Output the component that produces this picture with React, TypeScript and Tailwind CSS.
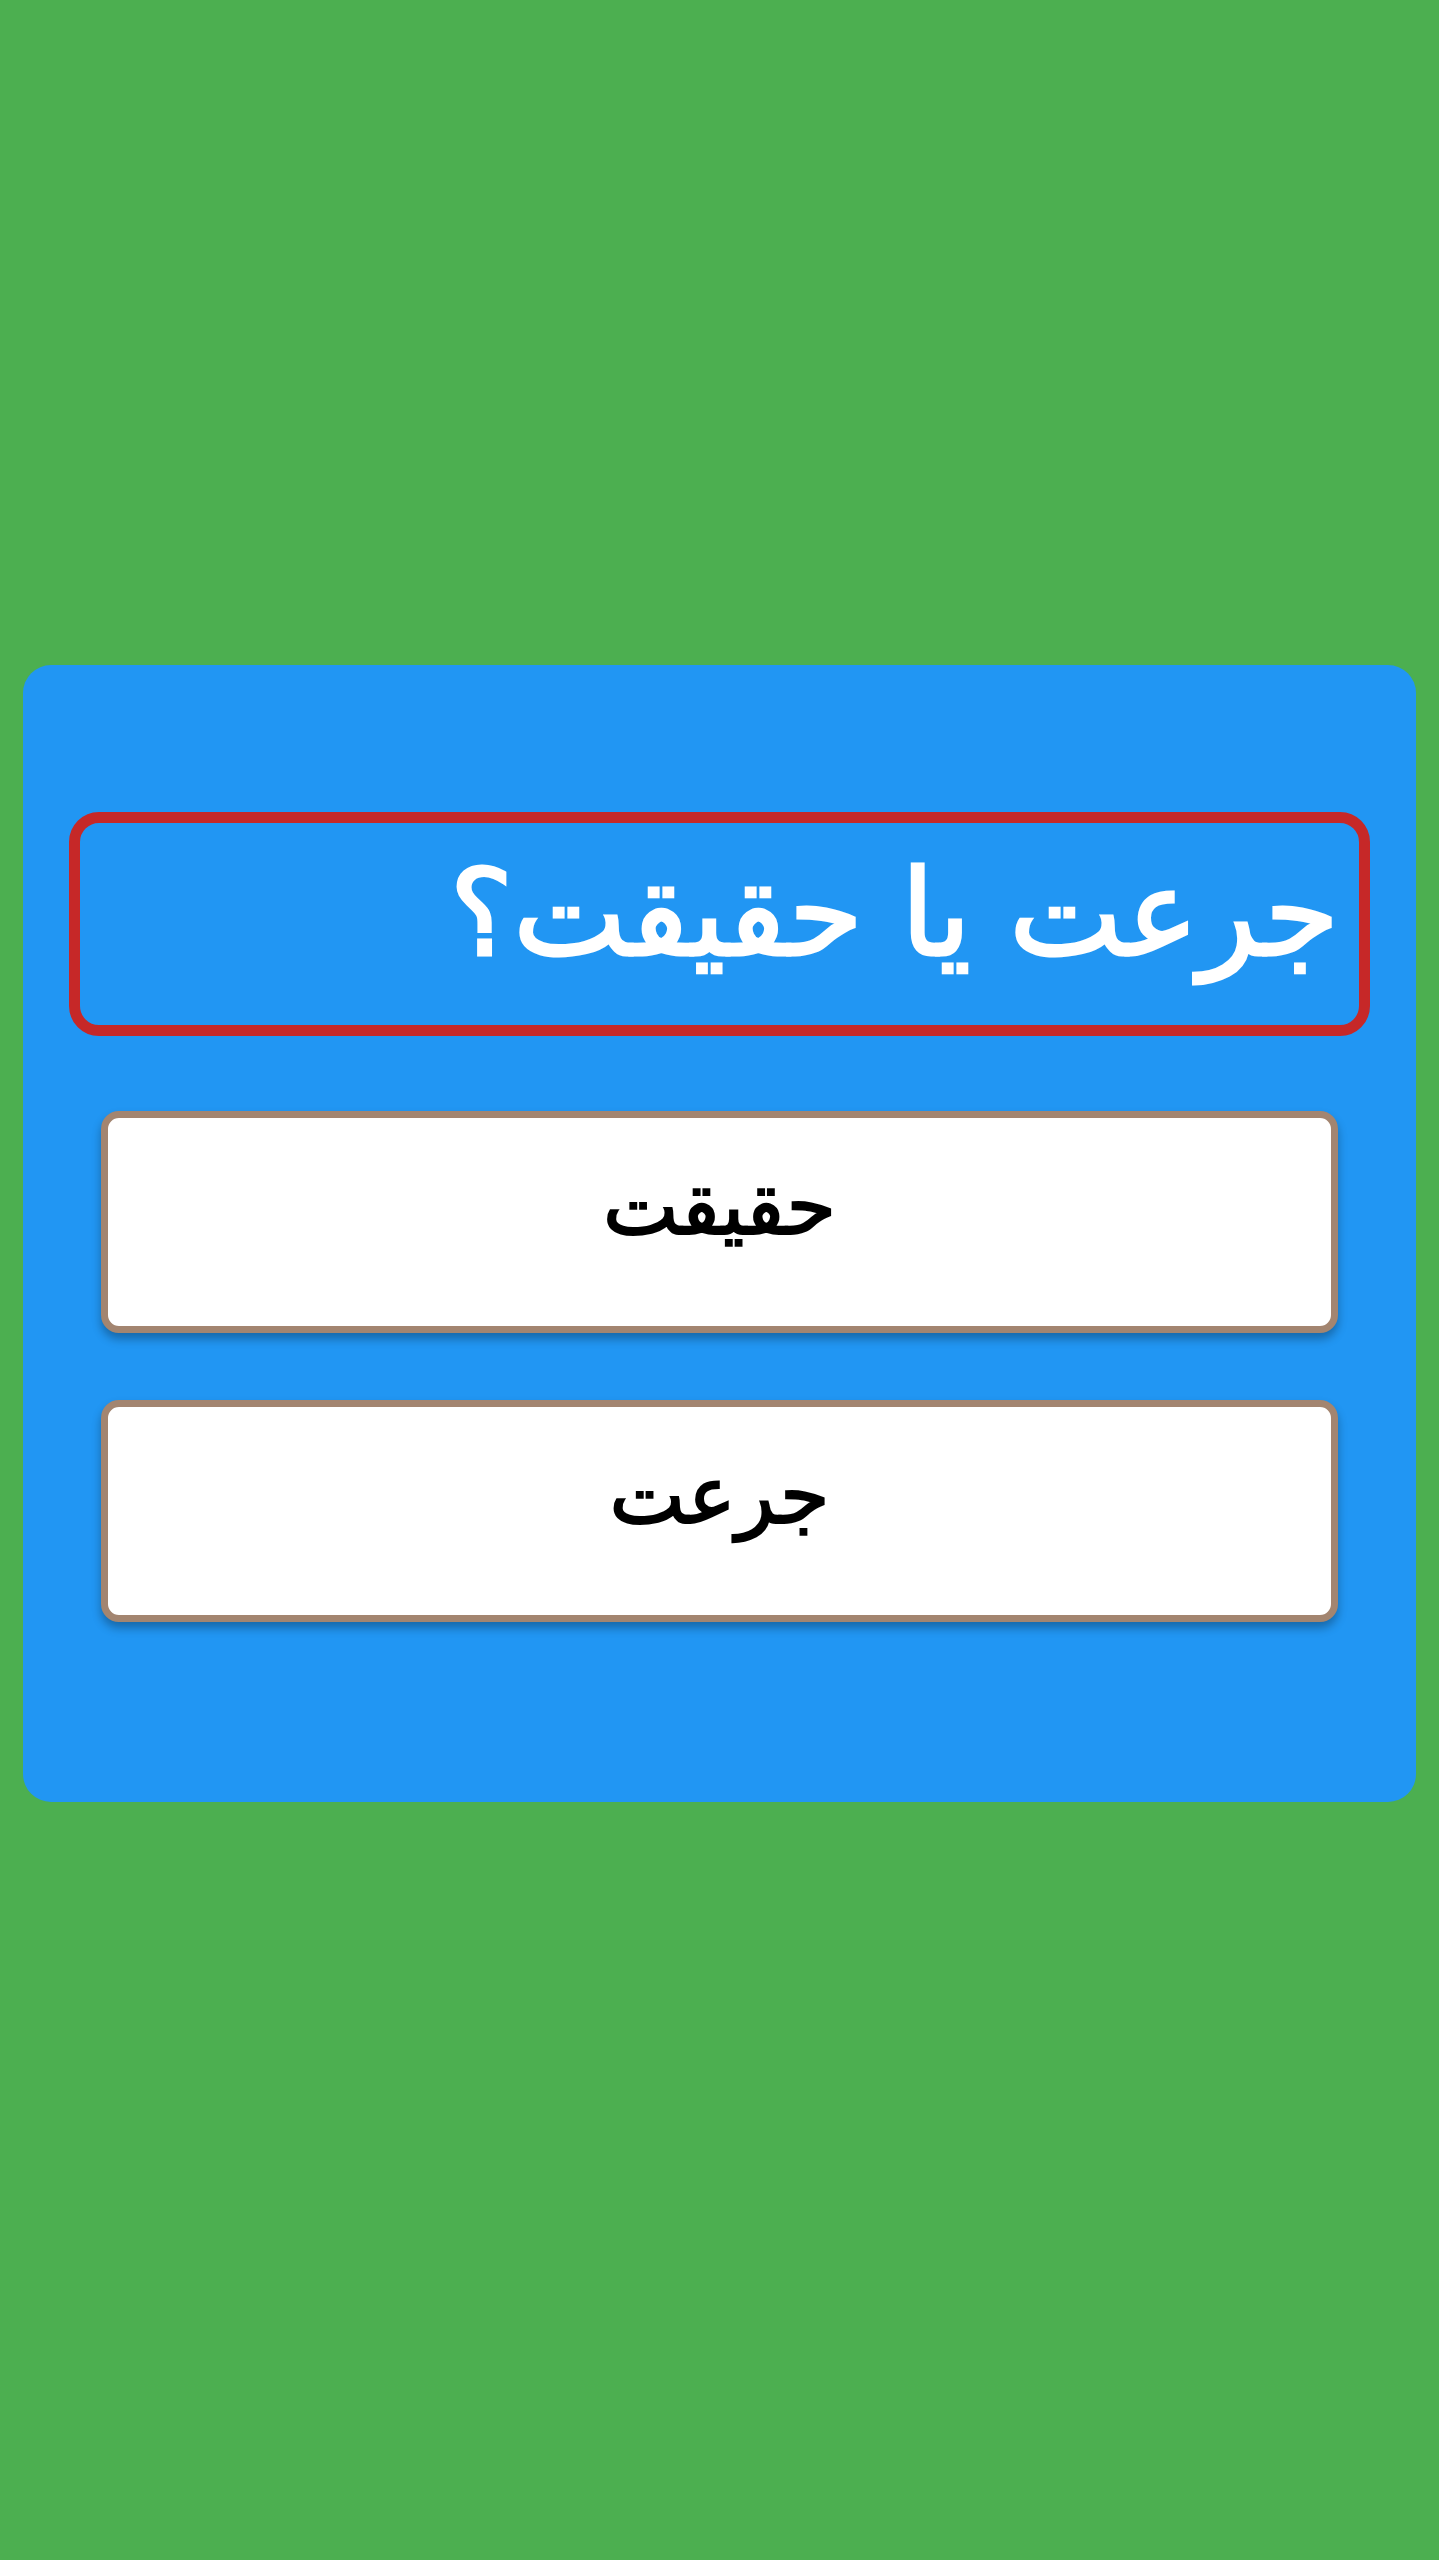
export default function App() {
  return (
    <div className="min-h-[2560px] bg-[#4caf50] px-[23px] pt-[665px]" dir="rtl">
      <div className="h-[1137px] rounded-[28px] bg-[#2196f3] px-[46px] pt-[147px]">
        <div className="flex h-[224px] items-center rounded-[30px] border-[11px] border-[#c62828] px-[20px] pb-[20px]">
          <h1
            className="text-[120px] leading-none text-white [-webkit-text-stroke:3px_white]"
            style={{ fontFamily: '"DejaVu Sans", sans-serif' }}
          >
            جرعت یا حقیقت؟
          </h1>
        </div>

        <div className="mx-[32px] mt-[75px] flex flex-col gap-[67px]">
          {["حقیقت", "جرعت"].map((label) => (
            <button
              key={label}
              className="flex h-[222px] items-center justify-center rounded-[18px] border-[7px] border-[#a38570] bg-white pb-[30px] text-[80px] leading-none text-black shadow-[0_6px_10px_rgba(0,0,0,0.3)] [-webkit-text-stroke:2px_black]"
              style={{ fontFamily: '"DejaVu Sans", sans-serif' }}
            >
              {label}
            </button>
          ))}
        </div>
      </div>
    </div>
  )
}
